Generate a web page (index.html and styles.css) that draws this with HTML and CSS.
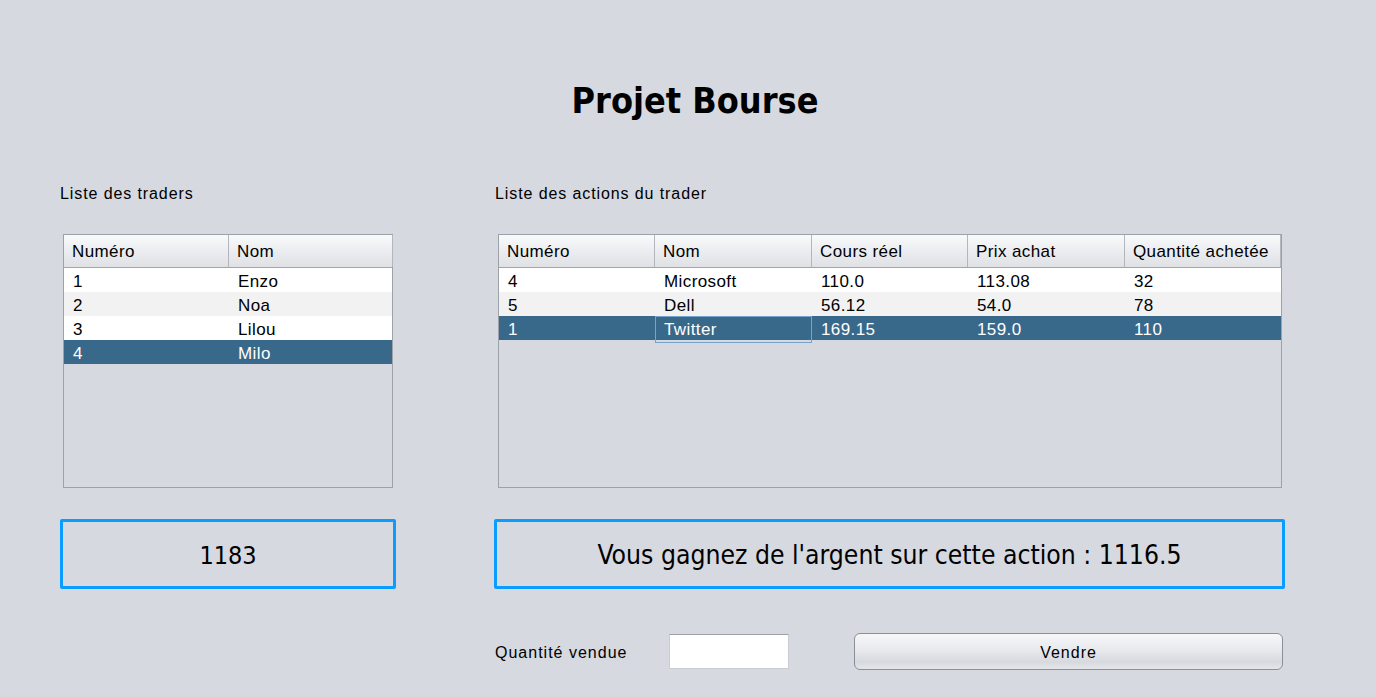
FILE: index.html
```html
<!DOCTYPE html>
<html lang="fr">
<head>
<meta charset="utf-8">
<title>Projet Bourse</title>
<link rel="stylesheet" href="styles.css">
</head>
<body>
<div class="app">
  <h1 class="title">Projet Bourse</h1>
  <div class="grid">
    <div class="col left">
      <div class="label">Liste des traders</div>
      <div class="table">
        <div class="thead">
          <div class="th">Numéro</div>
          <div class="th">Nom</div>
        </div>
        <div class="tr"><div class="td">1</div><div class="td">Enzo</div></div>
        <div class="tr alt"><div class="td">2</div><div class="td">Noa</div></div>
        <div class="tr"><div class="td">3</div><div class="td">Lilou</div></div>
        <div class="tr sel"><div class="td">4</div><div class="td">Milo</div></div>
      </div>
      <div class="result">1183</div>
    </div>
    <div class="col right">
      <div class="label">Liste des actions du trader</div>
      <div class="table five">
        <div class="thead">
          <div class="th">Numéro</div>
          <div class="th">Nom</div>
          <div class="th">Cours réel</div>
          <div class="th">Prix achat</div>
          <div class="th">Quantité achetée</div>
        </div>
        <div class="tr"><div class="td">4</div><div class="td">Microsoft</div><div class="td">110.0</div><div class="td">113.08</div><div class="td">32</div></div>
        <div class="tr alt"><div class="td">5</div><div class="td">Dell</div><div class="td">56.12</div><div class="td">54.0</div><div class="td">78</div></div>
        <div class="tr sel"><div class="td">1</div><div class="td focus">Twitter</div><div class="td">169.15</div><div class="td">159.0</div><div class="td">110</div></div>
      </div>
      <div class="result">Vous gagnez de l'argent sur cette action : 1116.5</div>
      <div class="sell">
        <span class="sell-label">Quantité vendue</span>
        <input class="qty" type="text">
        <button class="btn">Vendre</button>
      </div>
    </div>
  </div>
</div>
</body>
</html>
```
FILE: styles.css
```css
html, body {
  margin: 0;
  padding: 0;
  background: #d6d9e0;
  height: 100%;
}
.app {
  font-family: "Liberation Sans", Arial, sans-serif;
  color: #000;
  padding-top: 80px;
}
.title {
  margin: 0;
  padding-left: 14px;
  text-align: center;
  font-family: "DejaVu Sans Condensed", "DejaVu Sans", sans-serif;
  font-weight: bold;
  font-size: 35.7px;
  line-height: 42px;
  height: 42px;
}
.grid {
  display: grid;
  grid-template-columns: 336px 791px;
  column-gap: 98px;
  padding-left: 60px;
  margin-top: 62px;
}
.col {
  display: flex;
  flex-direction: column;
}
.label {
  font-size: 16px;
  letter-spacing: 0.9px;
  line-height: 20px;
  height: 20px;
}
.right .label { padding-left: 1px; }
.table {
  margin: 30px 3px 0 3px;
  height: 252px;
  border: 1px solid #9da1a8;
  display: flex;
  flex-direction: column;
  font-size: 17px;
  letter-spacing: 0.4px;
}
.right .table { margin-left: 4px; }
.thead {
  display: grid;
  grid-template-columns: 165px 164px;
  height: 32px;
  border-bottom: 1px solid #a0a4ab;
  background: linear-gradient(#f9fafb, #eceef1 45%, #dfe1e5);
}
.five .thead, .five .tr {
  grid-template-columns: 156px 157px 156px 157px 156px;
}
.th {
  line-height: 33px;
  padding-left: 8px;
  border-right: 1px solid #b3b6bd;
  white-space: nowrap;
  overflow: hidden;
}
.tr {
  display: grid;
  grid-template-columns: 165px 164px;
  height: 24px;
  background: #ffffff;
}
.tr.alt { background: #f2f2f2; }
.tr.sel { background: #39698a; color: #ffffff; }
.td {
  line-height: 27px;
  padding-left: 9px;
  white-space: nowrap;
  box-sizing: border-box;
}
.td.focus {
  border: 1px solid #76a3cc;
  line-height: 25px;
  padding-left: 8px;
}
.result {
  margin-top: 31px;
  height: 62px;
  border: 3px solid #0a9dff;
  border-radius: 2px;
  display: flex;
  align-items: center;
  justify-content: center;
  font-family: "DejaVu Sans Condensed", "DejaVu Sans", sans-serif;
  font-size: 26.3px;
  padding-top: 2px;
  box-sizing: content-box;
}
.left .result { font-size: 25px; }
.sell {
  margin-top: 44px;
  display: flex;
  align-items: center;
  height: 37px;
}
.sell-label {
  font-size: 16px;
  letter-spacing: 1px;
  padding-left: 1px;
  padding-top: 3px;
  width: 174px;
}
.qty {
  box-sizing: border-box;
  width: 120px;
  height: 35px;
  margin: 0;
  border: 1px solid #c9ccd1;
  border-top-color: #9ea2a8;
  background: #ffffff;
  outline: none;
}
.btn {
  box-sizing: border-box;
  margin-left: 65px;
  width: 429px;
  height: 37px;
  border: 1px solid #8b8f96;
  border-radius: 6px;
  background: linear-gradient(#f6f7f9, #e6e8ec 50%, #d6d9de 80%, #e4e6ea);
  font-family: "Liberation Sans", Arial, sans-serif;
  font-size: 16px;
  letter-spacing: 1px;
  color: #000;
  padding: 2px 0 0 0;
}
```
